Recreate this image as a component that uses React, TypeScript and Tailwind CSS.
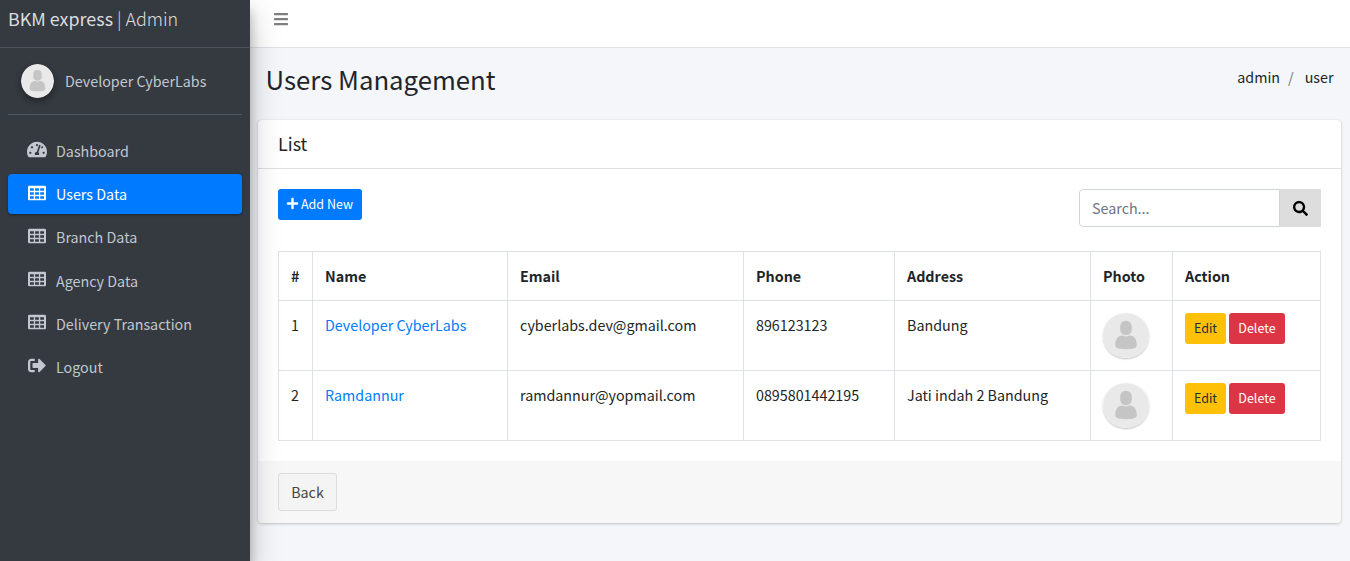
import React from "react";
import { FaBars, FaPlus, FaSearch, FaSignOutAlt, FaTachometerAlt } from "react-icons/fa";

function GridIcon() {
  return (
    <svg width="18" height="15" viewBox="0 0 18 15" fill="currentColor" fillRule="evenodd">
      <path d="M1.5 0h15A1.5 1.5 0 0 1 18 1.500v12a1.500 1.500 0 0 1-1.500 1.500h-15A1.500 1.500 0 0 1 0 13.500v-12A1.500 1.500 0 0 1 1.500 0zM2 2.800v2.400h3.800V2.800zM7.100 2.800v2.400h3.800V2.800zM12.200 2.800v2.400h3.800V2.800zM2 6.800v2.400h3.800V6.800zM7.100 6.800v2.400h3.800V6.800zM12.200 6.800v2.400h3.800V6.800zM2 10.800v2.400h3.800v-2.400zM7.100 10.800v2.400h3.800v-2.400zM12.200 10.800v2.400h3.800v-2.400z" />
    </svg>
  );
}

function Avatar({ className }: { className: string }) {
  return (
    <svg viewBox="0 0 46 46" className={className} preserveAspectRatio="none">
      <circle cx="23" cy="23" r="23" fill="#e9e9e9" />
      <rect x="17.200" y="8" width="11.600" height="14.500" rx="5.500" fill="#c5c5c5" />
      <path d="M12.200 33c0-6 2.500-10 7-10 1.500 0 2 1 3.800 1s2.300-1 3.800-1c4.500 0 7 4 7 10 0 3-4 4-10.800 4s-10.800-1-10.800-4z" fill="#c5c5c5" />
    </svg>
  );
}

const nav = [
  { label: "Dashboard", icon: <FaTachometerAlt size={20} />, active: false },
  { label: "Users Data", icon: <GridIcon />, active: true },
  { label: "Branch Data", icon: <GridIcon />, active: false },
  { label: "Agency Data", icon: <GridIcon />, active: false },
  { label: "Delivery Transaction", icon: <GridIcon />, active: false },
  { label: "Logout", icon: <FaSignOutAlt size={18} />, active: false },
];

const users = [
  { id: 1, name: "Developer CyberLabs", email: "cyberlabs.dev@gmail.com", phone: "896123123", address: "Bandung" },
  { id: 2, name: "Ramdannur", email: "ramdannur@yopmail.com", phone: "0895801442195", address: "Jati indah 2 Bandung" },
];

const columns = [
  { label: "#", width: "w-[34px]" },
  { label: "Name", width: "w-[195px]" },
  { label: "Email", width: "w-[236px]" },
  { label: "Phone", width: "w-[151px]" },
  { label: "Address", width: "w-[196px]" },
  { label: "Photo", width: "w-[82px]" },
  { label: "Action", width: "w-[148px]" },
];

const cell = "border border-[#dee2e6] p-3 align-top";

function Sidebar() {
  return (
    <aside className="relative z-10 w-[250px] shrink-0 bg-[#343a40] text-[#c2c7d0] shadow-[0_14px_28px_rgba(0,0,0,0.25),0_10px_10px_rgba(0,0,0,0.22)]">
      <div className="h-12 border-b border-[#4b545c] pl-2 pt-[3px] text-[17.9px] leading-[30px] text-[#dcdddf]">
        BKM express<span className="font-light"> | Admin</span>
      </div>
      <div className="mx-2 flex h-[67px] border-b border-[#4f5962] pl-[13px] pt-4">
        <Avatar className="h-[34px] w-[33px] rounded-full shadow-[0_3px_6px_rgba(0,0,0,0.16),0_3px_6px_rgba(0,0,0,0.23)]" />
        <span className="ml-[11px] mt-[5px]">Developer CyberLabs</span>
      </div>
      <nav className="mt-4 flex flex-col gap-[3.2px] px-2">
        {nav.map((item) => (
          <a
            key={item.label}
            className={
              item.active
                ? "flex h-10 items-center rounded bg-[#007bff] pl-4 text-white shadow-[0_1px_3px_rgba(0,0,0,0.12),0_1px_2px_rgba(0,0,0,0.24)]"
                : "flex h-10 items-center rounded pl-4"
            }
          >
            <span className="flex w-[26px] -translate-y-[1.5px] justify-center">{item.icon}</span>
            <span className="ml-[6px]">{item.label}</span>
          </a>
        ))}
      </nav>
    </aside>
  );
}

export default function App() {
  return (
    <div className="flex h-[561px] overflow-hidden bg-[#f4f6f9] font-['Noto_Sans_CJK_SC',sans-serif] text-[14.31px] leading-6 text-[#212529]">
      <Sidebar />
      <div className="flex min-w-0 flex-1 flex-col">
        <header className="flex h-12 shrink-0 border-b border-[#dee2e6] bg-white pl-[23px] pt-[11px] text-[#7f7f7f]">
          <FaBars size={16} />
        </header>
        <div className="flex h-[72px] shrink-0 justify-between pl-[15.5px] pr-[16.5px]">
          <h1 className="mt-[13px] text-[25.76px] leading-[35px]">Users Management</h1>
          <div className="mt-[17px] flex">
            <span>admin</span>
            <span className="pl-2 pr-[11px] text-[#6c757d]">/</span>
            <span>user</span>
          </div>
        </div>
        <main className="mx-2 rounded bg-white shadow-[0_0_1px_rgba(0,0,0,0.125),0_1px_3px_rgba(0,0,0,0.2)] w-[1083px]">
          <div className="h-[49px] border-b border-[#dfdfdf] px-5 pt-[11px] text-[17.9px]">List</div>
          <div className="h-[292px] px-5 pt-5">
            <div className="flex h-[62px] justify-between">
              <button className="flex h-[31px] w-[84px] items-center rounded-[3px] bg-[#007bff] pl-2 text-[12.52px] text-white">
                <FaPlus size={13} className="mr-[2px] -translate-y-px" />
                <span className="-translate-y-px">Add New</span>
              </button>
              <div className="flex h-[38px]">
                <input
                  placeholder="Search..."
                  className="w-[201px] rounded-l border border-[#ced4da] px-3 outline-none placeholder:text-[#6c757d]"
                />
                <button className="flex w-[41px] items-center justify-center bg-[#ddd] text-black">
                  <FaSearch size={15} />
                </button>
              </div>
            </div>
            <table className="w-[1043px] table-fixed border-collapse text-left">
              <thead>
                <tr className="h-[49px]">
                  {columns.map((c) => (
                    <th key={c.label} className={`${cell} ${c.width} font-bold`}>{c.label}</th>
                  ))}
                </tr>
              </thead>
              <tbody>
                {users.map((u) => (
                  <tr key={u.id} className="h-[70px]">
                    <td className={cell}>{u.id}</td>
                    <td className={`${cell} text-[#007bff]`}>{u.name}</td>
                    <td className={cell}>{u.email}</td>
                    <td className={cell}>{u.phone}</td>
                    <td className={cell}>{u.address}</td>
                    <td className={cell}>
                      <Avatar className="-ml-[0.5px] -mb-1 h-[45px] w-[46px] rounded-full shadow-[0_1px_2px_rgba(0,0,0,0.25)]" />
                    </td>
                    <td className={cell}>
                      <div className="flex gap-[3px] text-[12.52px]">
                        <button className="h-[31px] w-[41px] rounded-[3px] bg-[#ffc107] pb-[2px] text-[#1f2d3d]">Edit</button>
                        <button className="h-[31px] w-[56px] rounded-[3px] bg-[#dc3545] pb-[2px] text-white">Delete</button>
                      </div>
                    </td>
                  </tr>
                ))}
              </tbody>
            </table>
          </div>
          <footer className="h-[62px] rounded-b bg-[#f7f7f7] px-5 pt-3">
            <button className="h-[38px] w-[59px] rounded-[3px] border border-[#ddd] bg-[#f4f4f4] text-[#444]">Back</button>
          </footer>
        </main>
      </div>
    </div>
  );
}
